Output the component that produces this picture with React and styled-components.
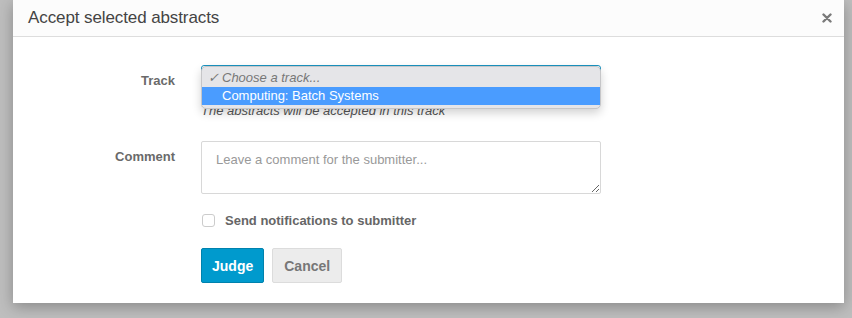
import React, { useState } from 'react';
import styled, { createGlobalStyle } from 'styled-components';

const GlobalStyle = createGlobalStyle`
  html, body {
    margin: 0;
    padding: 0;
    background: #bebebe;
    font-family: 'Liberation Sans', Arial, sans-serif;
  }
`;

const Page = styled.div`
  width: 852px;
  height: 318px;
  overflow: hidden;
`;

const Dialog = styled.div`
  margin-left: 13px;
  width: 831px;
  height: 303px;
  background: #fff;
  box-shadow: 0 4px 14px rgba(0, 0, 0, 0.28);
  display: flex;
  flex-direction: column;
`;

const Header = styled.div`
  height: 36px;
  display: flex;
  align-items: center;
  justify-content: space-between;
  padding: 0 11px 0 15px;
  background: #fcfcfc;
  border-bottom: 1px solid #ddd;
`;

const Title = styled.div`
  font-size: 17px;
  color: #444;
  letter-spacing: -0.1px;
`;

const Close = styled.button`
  border: none;
  background: none;
  padding: 0;
  width: 12px;
  height: 12px;
  display: flex;
  align-items: center;
  justify-content: center;
  cursor: pointer;
`;

const Body = styled.div`
  padding: 28px 0 20px 0;
  display: grid;
  grid-template-columns: 162px 400px;
  column-gap: 26px;
  row-gap: 0;
`;

const Label = styled.div`
  text-align: right;
  font-size: 13px;
  font-weight: bold;
  color: #6a6a6a;
  padding-top: ${(p) => p.$top}px;
`;

const Field = styled.div`
  display: flex;
  flex-direction: column;
  margin-bottom: ${(p) => p.$gap || 0}px;
`;

const SelectWrap = styled.div`
  position: relative;
  height: 28px;
`;

const SelectBox = styled.div`
  height: 26px;
  border: 1px solid #1a93c0;
  border-radius: 3px;
  background: #fff;
`;

const Popup = styled.div`
  position: absolute;
  top: 1px;
  left: 0;
  width: 400px;
  padding: 2px 0 3px;
  background: #e5e5e8;
  border: 1px solid #c6c6c8;
  border-radius: 5px;
  box-sizing: border-box;
  box-shadow: 0 4px 10px rgba(0, 0, 0, 0.18);
  z-index: 2;
`;

const Option = styled.div`
  height: 18px;
  line-height: 18px;
  font-size: 13px;
  padding-left: ${(p) => (p.$check ? 6 : 20)}px;
  color: ${(p) => (p.$active ? '#fff' : '#777')};
  background: ${(p) => (p.$active ? '#4a9cff' : 'transparent')};
  font-style: ${(p) => (p.$italic ? 'italic' : 'normal')};
`;

const Check = styled.span`
  display: inline-block;
  width: 14px;
`;

const Help = styled.div`
  margin-top: 10px;
  font-size: 13px;
  font-style: italic;
  color: #555;
  line-height: 16px;
`;

const TextArea = styled.textarea`
  width: 400px;
  height: 53px;
  box-sizing: border-box;
  border: 1px solid #d8d8d8;
  border-radius: 2px;
  padding: 10px 14px;
  font-family: 'Liberation Sans', Arial, sans-serif;
  font-size: 13px;
  color: #333;
  resize: vertical;
  outline: none;
  display: block;
  &::placeholder {
    color: #999;
  }
`;

const CheckRow = styled.label`
  display: flex;
  align-items: center;
  gap: 10px;
  height: 18px;
  cursor: pointer;
`;

const Box = styled.span`
  width: 11px;
  height: 11px;
  margin-left: 1px;
  border: 1px solid #ccc;
  border-radius: 3px;
  background: #fff;
`;

const CheckText = styled.span`
  font-size: 13px;
  font-weight: bold;
  color: #666;
`;

const Buttons = styled.div`
  display: flex;
  gap: 8px;
`;

const Button = styled.button`
  height: 35px;
  padding: 0 ${(p) => (p.$primary ? 10 : 11)}px;
  font-family: 'Liberation Sans', Arial, sans-serif;
  font-size: 14px;
  font-weight: bold;
  border-radius: 2px;
  border: 1px solid ${(p) => (p.$primary ? '#0082ad' : '#dcdcdc')};
  background: ${(p) => (p.$primary ? '#009acd' : '#ececec')};
  color: ${(p) => (p.$primary ? '#fff' : '#777')};
  cursor: pointer;
`;

const Spacer = styled.div``;

const App = () => {
  const [notify, setNotify] = useState(false);

  return (
    <>
      <GlobalStyle />
      <Page>
        <Dialog>
          <Header>
            <Title>Accept selected abstracts</Title>
            <Close aria-label="Close">
              <svg width="10" height="10" viewBox="0 0 10 10">
                <path d="M1.5 1.5 L8.5 8.5 M8.5 1.5 L1.5 8.5" stroke="#7a7a7a" strokeWidth="2.4" strokeLinecap="round" />
              </svg>
            </Close>
          </Header>
          <Body>
            <Label $top={8}>Track</Label>
            <Field $gap={22}>
              <SelectWrap>
                <SelectBox />
                <Popup>
                  <Option $check $italic>
                    <Check>✓</Check>Choose a track...
                  </Option>
                  <Option $active>Computing: Batch Systems</Option>
                </Popup>
              </SelectWrap>
              <Help>The abstracts will be accepted in this track</Help>
            </Field>

            <Label $top={8}>Comment</Label>
            <Field $gap={17}>
              <TextArea placeholder="Leave a comment for the submitter..." />
            </Field>

            <Spacer />
            <Field $gap={19}>
              <CheckRow onClick={() => setNotify(!notify)}>
                <Box />
                <CheckText>Send notifications to submitter</CheckText>
              </CheckRow>
            </Field>

            <Spacer />
            <Buttons>
              <Button $primary>Judge</Button>
              <Button>Cancel</Button>
            </Buttons>
          </Body>
        </Dialog>
      </Page>
    </>
  );
};

export default App;
